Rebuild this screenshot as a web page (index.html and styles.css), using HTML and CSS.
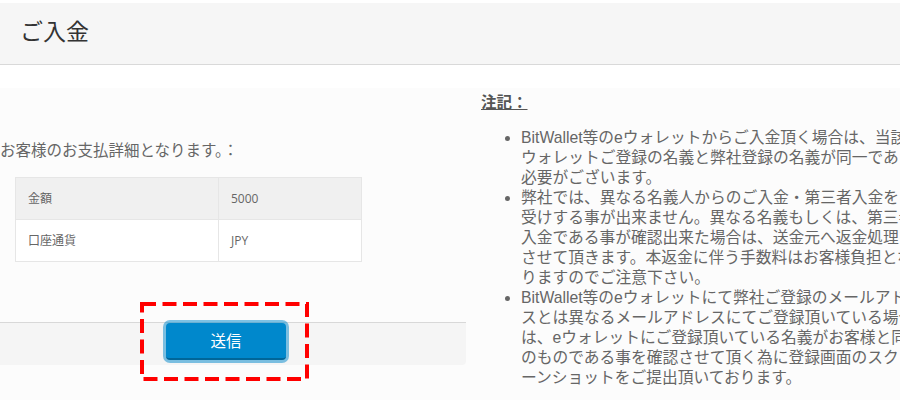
FILE: index.html
```html
<!DOCTYPE html>
<html lang="ja">
<head>
<meta charset="utf-8">
<title>ご入金</title>
<link rel="stylesheet" href="styles.css">
</head>
<body>
<header class="page-header">
  <h1 class="page-title">ご入金</h1>
</header>
<main class="content">
  <section class="pay-panel">
    <p class="pay-intro">お客様のお支払詳細となります。：</p>
    <table class="pay-table">
      <tr class="row-shaded"><td class="cell-label">金額</td><td class="cell-value">5000</td></tr>
      <tr><td class="cell-label">口座通貨</td><td class="cell-value">JPY</td></tr>
    </table>
    <div class="pay-footer">
      <button class="submit-btn" type="button">送信</button>
    </div>
    <svg class="highlight-box" width="169" height="79" viewBox="0 0 169 79">
      <rect x="2" y="2" width="165" height="75" fill="none" stroke="#ff0000" stroke-width="4" stroke-dasharray="14 6.5"/>
    </svg>
  </section>
  <section class="notes">
    <h2 class="notes-title">注記：</h2>
    <ul class="notes-list">
      <li>BitWallet等のeウォレットからご入金頂く場合は、当該eウォレットご登録の名義と弊社登録の名義が同一である必要がございます。</li>
      <li>弊社では、異なる名義人からのご入金・第三者入金をお受けする事が出来ません。異なる名義もしくは、第三者入金である事が確認出来た場合は、送金元へ返金処理をさせて頂きます。本返金に伴う手数料はお客様負担となりますのでご注意下さい。</li>
      <li>BitWallet等のeウォレットにて弊社ご登録のメールアドレスとは異なるメールアドレスにてご登録頂いている場合は、eウォレットにご登録頂いている名義がお客様と同一のものである事を確認させて頂く為に登録画面のスクリーンショットをご提出頂いております。</li>
    </ul>
  </section>
</main>
</body>
</html>
```

FILE: styles.css
```css
html, body {
  margin: 0;
  padding: 0;
  background: #ffffff;
  overflow: hidden;
  width: 900px;
  height: 400px;
}
body {
  font-family: "Open Sans", "Noto Sans CJK JP", sans-serif;
  color: #666666;
  font-size: 15.5px;
  line-height: 20px;
}
.page-header {
  margin-top: 3px;
  height: 61px;
  background: #f6f6f6;
  border-bottom: 1px solid #d9d9d9;
  display: flex;
  align-items: center;
  padding-left: 20px;
}
.page-title {
  margin: 0;
  font-weight: normal;
  font-size: 23px;
  color: #333333;
  line-height: 30px;
  position: relative;
  top: -3px;
}
.content {
  margin-top: 23px;
  background: #fcfcfc;
  display: flex;
  align-items: flex-start;
  height: 312px;
}
.pay-panel {
  position: relative;
  width: 466px;
  flex-shrink: 0;
  padding-top: 52px;
}
.pay-intro {
  margin: 0;
  color: #666666;
}
.pay-table {
  margin: 17px 0 0 15px;
  width: 347px;
  border-collapse: collapse;
  font-size: 12px;
  color: #666666;
}
.pay-table td {
  border: 1px solid #e6e6e6;
  height: 42px;
  padding: 0 12px;
  box-sizing: border-box;
}
.pay-table .cell-label {
  width: 203px;
}
.row-shaded {
  background: #f0f0f0;
}
.pay-table tr:not(.row-shaded) {
  background: #ffffff;
}
.pay-footer {
  margin-top: 60px;
  border-top: 1px solid #d8d8d8;
  background: #f5f5f5;
  border-bottom-right-radius: 4px;
  height: 42px;
  padding-left: 166px;
  box-sizing: content-box;
}
.submit-btn {
  display: block;
  width: 120px;
  height: 37px;
  border: none;
  border-bottom: 2px solid #006699;
  border-radius: 4px;
  background: #0088cc;
  color: #ffffff;
  font-family: inherit;
  font-size: 15.5px;
  box-shadow: 0 0 0 3px rgba(0, 136, 204, 0.5);
  padding: 0;
}
.highlight-box {
  position: absolute;
  left: 140px;
  top: 214px;
}
.notes {
  margin-left: 15px;
  width: 460px;
  flex-shrink: 0;
  padding-top: 4px;
}
.notes-title {
  margin: 0;
  font-size: 15.5px;
  font-weight: bold;
  text-decoration: underline;
  color: #555555;
  line-height: 20px;
}
.notes-list {
  margin: 16px 0 0 0;
  padding-left: 40px;
  width: 402px;
  font-family: "Liberation Sans", "Noto Sans CJK JP", sans-serif;
  font-size: 15.75px;
  line-break: loose;
}
.notes-list li {
  line-height: 20px;
}
```
